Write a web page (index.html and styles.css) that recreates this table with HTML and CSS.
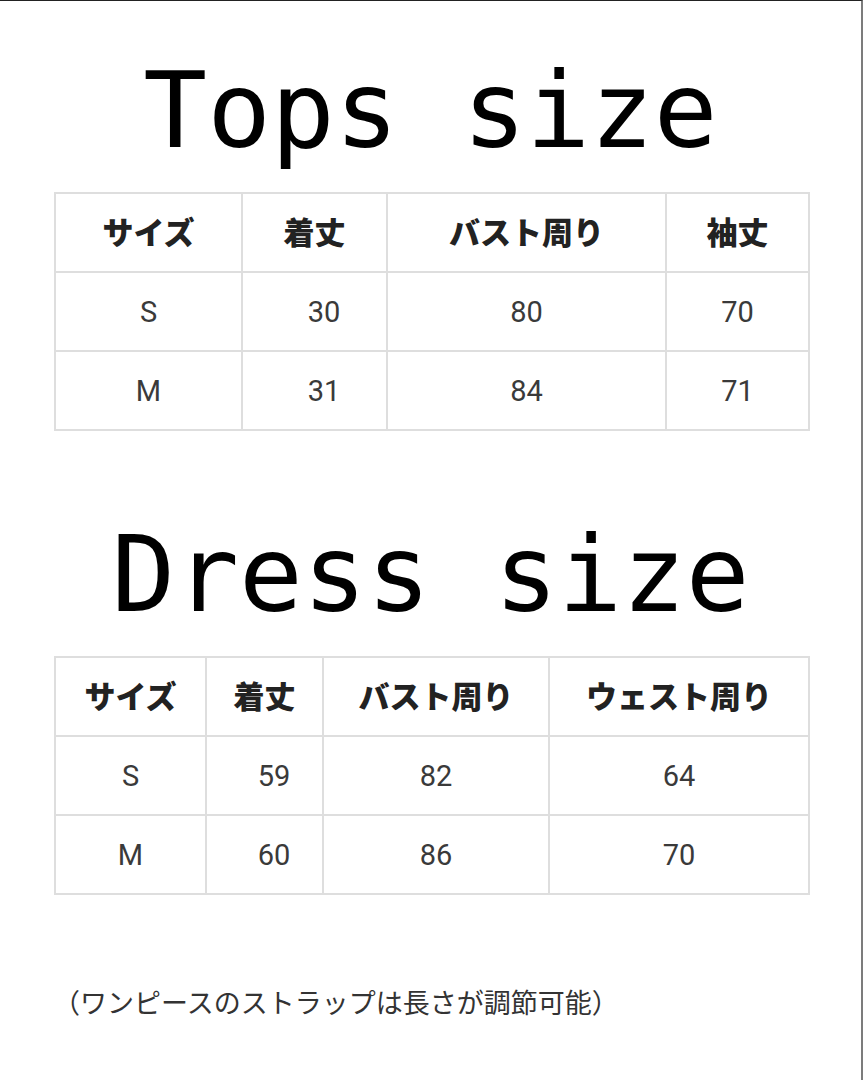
FILE: index.html
```html
<!DOCTYPE html>
<html lang="ja">
<head>
    <meta charset="UTF-8">
    <meta name="viewport" content="width=device-width, initial-scale=1.0">
    <title>Size chart</title>
    <link rel="stylesheet" href="styles.css">
</head>
<body>
    <div class="page">
        <h1 class="title">Tops size</h1>

        <table class="size-table tops">
            <thead>
                <tr>
                    <th>サイズ</th>
                    <th>着丈</th>
                    <th>バスト周り</th>
                    <th>袖丈</th>
                </tr>
            </thead>
            <tbody>
                <tr>
                    <td>S</td>
                    <td>30</td>
                    <td>80</td>
                    <td>70</td>
                </tr>
                <tr>
                    <td>M</td>
                    <td>31</td>
                    <td>84</td>
                    <td>71</td>
                </tr>
            </tbody>
        </table>

        <h1 class="title second">Dress size</h1>

        <table class="size-table dress">
            <thead>
                <tr>
                    <th>サイズ</th>
                    <th>着丈</th>
                    <th>バスト周り</th>
                    <th>ウェスト周り</th>
                </tr>
            </thead>
            <tbody>
                <tr>
                    <td>S</td>
                    <td>59</td>
                    <td>82</td>
                    <td>64</td>
                </tr>
                <tr>
                    <td>M</td>
                    <td>60</td>
                    <td>86</td>
                    <td>70</td>
                </tr>
            </tbody>
        </table>

        <p class="note">（ワンピースのストラップは長さが調節可能）</p>
    </div>
</body>
</html>
```

FILE: styles.css
```css
body {
    margin: 0;
    padding: 0;
    background-color: #fff;
    font-family: "Noto Sans CJK JP", sans-serif;
}

.page {
    box-sizing: border-box;
    width: 863px;
    height: 1080px;
    border-top: 1px solid #222;
    border-right: 2px solid #7c7c7c;
    overflow: hidden;
}

.title {
    margin: 56px 0 0;
    font-family: "DejaVu Sans Mono", monospace;
    font-size: 106px;
    font-weight: normal;
    line-height: 108px;
    text-align: center;
    color: #000;
}

.title.second {
    margin-top: 90px;
}

.size-table {
    margin: 27px 0 0 54px;
    table-layout: fixed;
    border-collapse: collapse;
}

.size-table th,
.size-table td {
    height: 77px;
    padding: 0;
    border: 2px solid #dedede;
    text-align: center;
    vertical-align: middle;
}

.size-table th {
    height: 72px;
    padding-bottom: 5px;
    font-family: "Noto Sans CJK JP", sans-serif;
    font-size: 31px;
    font-weight: 900;
    color: #222;
}

.size-table td {
    font-family: Roboto, "Noto Sans CJK JP", sans-serif;
    font-size: 29px;
    color: #3a3a3a;
}

.size-table td:nth-child(2) {
    padding-left: 19px;
}

.tops th:nth-child(1) { width: 185px; }
.tops th:nth-child(2) { width: 143px; }
.tops th:nth-child(3) { width: 277px; }
.tops th:nth-child(4) { width: 141px; }

.dress th:nth-child(1) { width: 149px; }
.dress th:nth-child(2) { width: 115px; }
.dress th:nth-child(3) { width: 224px; }
.dress th:nth-child(4) { width: 258px; }

.note {
    margin: 91px 0 0 53px;
    font-size: 27px;
    line-height: 31px;
    color: #333;
}
```
